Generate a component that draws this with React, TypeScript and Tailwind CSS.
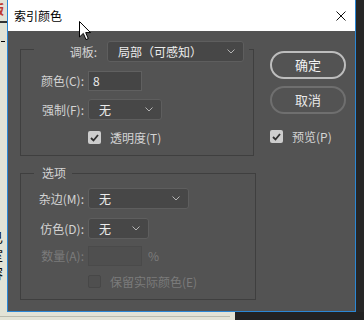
import React from "react";

function Chevron() {
  return (
    <svg width="8" height="5" viewBox="0 0 8 5" className="shrink-0">
      <polyline points="0.5,0.5 4,4 7.5,0.5" fill="none" stroke="#b4b4b4" strokeWidth="1" />
    </svg>
  );
}

function Select({ value, w }: { value: string; w: string }) {
  return (
    <div
      className={`${w} h-[21px] flex items-center justify-between pl-[10px] pr-[8px] rounded-[3px] bg-[#474747] border border-[#5e5e5e] text-[#ececec] whitespace-nowrap`}
    >
      <span>{value}</span>
      <Chevron />
    </div>
  );
}

function Check({ on, disabled }: { on?: boolean; disabled?: boolean }) {
  if (disabled) {
    return <div className="w-[13px] h-[13px] rounded-[2px] border border-[#474747] bg-[#4f4f4f] shrink-0" />;
  }
  return (
    <div className="w-[13px] h-[13px] rounded-[2px] bg-[#cdcdcd] flex items-center justify-center shrink-0">
      {on && (
        <svg width="9" height="8" viewBox="0 0 9 8">
          <polyline points="1,4 3.5,6.5 8,1" fill="none" stroke="#2f2f2f" strokeWidth="1.8" />
        </svg>
      )}
    </div>
  );
}

function Row({ label, disabled, children }: { label: string; disabled?: boolean; children: React.ReactNode }) {
  return (
    <div className="flex items-center">
      <div className={`w-[63px] mr-[4px] text-right whitespace-nowrap ${disabled ? "text-[#7b7b7b]" : "text-[#d4d4d4]"}`}>
        {label}
      </div>
      {children}
    </div>
  );
}

export default function App() {
  return (
    <div className="relative w-[364px] h-[320px] overflow-hidden bg-[#222222] text-[12px] leading-[16px] [font-family:'Noto_Sans_CJK_SC','Microsoft_YaHei',sans-serif]">
      <div className="flex h-[312px]">
        {/* document behind the dialog */}
        <div className="w-[7px] bg-[#e1e3d6] overflow-hidden flex flex-col text-[13px] leading-[18px] text-black">
          <div className="ml-[-9px] text-[#c0392b] font-bold">版</div>
          <div className="mt-[3px] h-[2px] bg-[#333]" />
          <div className="mt-[18px] ml-[1px] w-[4px] h-px bg-black" />
          <div className="mt-[186px] ml-[-10px] flex flex-col">
            <span>已</span>
            <span>室</span>
            <span>容</span>
          </div>
        </div>

        {/* dialog */}
        <div className="w-[349px] border-x border-b border-[#2b87d4] flex flex-col">
          <div className="h-[31px] bg-white flex items-center justify-between pl-[6px] pr-[9px] text-black">
            <span className="text-[12px]">索引颜色</span>
            <svg width="10" height="10" viewBox="0 0 10 10">
              <path d="M0.5 0.5 L9.5 9.5 M9.5 0.5 L0.5 9.5" stroke="#111" strokeWidth="1" />
            </svg>
          </div>

          <div className="flex-1 bg-[#535353] flex pl-[12px] pt-[10px]">
            <div className="w-[236px] flex flex-col">
              {/* palette group */}
              <fieldset className="w-[234px] border border-[#3f3f3f] pb-[11px]">
                <legend className="ml-[13px]">
                  <div className="h-[17px] flex items-start pr-[5px]">
                    <div className="w-[63px] h-[21px] flex items-center justify-end text-[#d4d4d4]">调板:</div>
                    <div className="ml-[10px]">
                      <Select value="局部（可感知）" w="w-[137px]" />
                    </div>
                  </div>
                </legend>
                <div className="pt-[13px] flex flex-col">
                  <Row label="颜色(C):">
                    <div className="w-[54px] h-[20px] bg-[#454545] border border-[#606060] pl-[4px] flex items-center text-[#ececec]">
                      8
                    </div>
                  </Row>
                  <div className="mt-[8px]">
                    <Row label="强制(F):">
                      <Select value="无" w="w-[74px]" />
                    </Row>
                  </div>
                  <div className="mt-[11px] ml-[67px] flex items-center h-[13px]">
                    <Check on />
                    <span className="ml-[9px] text-[#d4d4d4]">透明度(T)</span>
                  </div>
                </div>
              </fieldset>

              {/* options group */}
              <fieldset className="mt-[9px] w-[236px] border border-[#3f3f3f] pb-[11px]">
                <legend className="ml-[13px] pl-[8px] pr-[6px] text-[#d4d4d4]">选项</legend>
                <div className="pt-[7px] flex flex-col">
                  <Row label="杂边(M):">
                    <Select value="无" w="w-[101px]" />
                  </Row>
                  <div className="mt-[9px]">
                    <Row label="仿色(D):">
                      <Select value="无" w="w-[61px]" />
                    </Row>
                  </div>
                  <div className="mt-[7px]">
                    <Row label="数量(A):" disabled>
                      <div className="w-[54px] h-[20px] bg-[#4f4f4f] border border-[#4a4a4a]" />
                      <span className="ml-[6px] text-[#7b7b7b]">%</span>
                    </Row>
                  </div>
                  <div className="mt-[9px] ml-[67px] flex items-center h-[13px]">
                    <Check disabled />
                    <span className="ml-[9px] text-[#7b7b7b]">保留实际颜色(E)</span>
                  </div>
                </div>
              </fieldset>
            </div>

            {/* buttons */}
            <div className="ml-[14px] w-[76px] flex flex-col pt-[10px]">
              <button className="h-[28px] rounded-full border-2 border-[#bdbdbd] text-[13px] text-[#f2f2f2]">确定</button>
              <button className="mt-[7px] h-[28px] rounded-full border-2 border-[#6f6f6f] text-[13px] text-[#e8e8e8]">取消</button>
              <div className="mt-[16px] flex items-center h-[13px]">
                <Check on />
                <span className="ml-[9px] text-[#d4d4d4]">预览(P)</span>
              </div>
            </div>
          </div>
        </div>

        <div className="flex-1 bg-[#262626]" />
      </div>

      {/* strip below the dialog */}
      <div className="flex h-[8px]">
        <div className="w-[235px] bg-[#e2e3d6] flex flex-col">
          <div className="mt-[4px] h-px w-[230px] bg-[#b9bbae]" />
        </div>
        <div className="flex-1 bg-[#222222]" />
      </div>

      {/* mouse pointer */}
      <svg className="absolute left-[79px] top-[21px]" width="13" height="20" viewBox="0 0 13 20">
        <path d="M0.5 0.5 L0.5 16 L4.3 12.4 L7 18.6 L9.3 17.6 L6.7 11.6 L11.5 11.6 Z" fill="#fff" stroke="#000" strokeWidth="1" />
      </svg>
    </div>
  );
}
